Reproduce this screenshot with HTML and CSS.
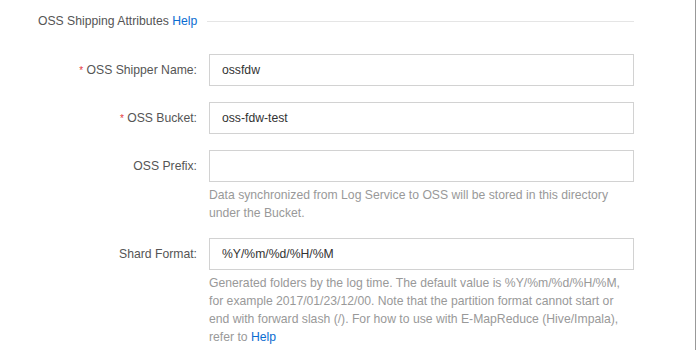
FILE: index.html
```html
<!DOCTYPE html>
<html lang="en">
<head>
    <meta charset="UTF-8">
    <title>OSS Shipping Attributes</title>
    <link rel="stylesheet" href="styles.css">
</head>
<body>
    <div class="panel">
        <!-- section title -->
        <div class="section-title">
            <span class="title-text">OSS Shipping Attributes <a href="#" class="link">Help</a></span>
            <span class="title-line"></span>
        </div>

        <form class="ship-form">
            <div class="form-row">
                <label class="form-label" for="shipper"><span class="req">*</span> OSS Shipper Name:</label>
                <div class="form-field">
                    <input type="text" id="shipper" class="form-input" value="ossfdw">
                </div>
            </div>

            <div class="form-row">
                <label class="form-label" for="bucket"><span class="req">*</span> OSS Bucket:</label>
                <div class="form-field">
                    <input type="text" id="bucket" class="form-input" value="oss-fdw-test">
                </div>
            </div>

            <div class="form-row">
                <label class="form-label" for="prefix">OSS Prefix:</label>
                <div class="form-field">
                    <input type="text" id="prefix" class="form-input" value="">
                    <p class="form-help">Data synchronized from Log Service to OSS will be stored in this directory under the Bucket.</p>
                </div>
            </div>

            <div class="form-row">
                <label class="form-label" for="shard">Shard Format:</label>
                <div class="form-field">
                    <input type="text" id="shard" class="form-input" value="%Y/%m/%d/%H/%M">
                    <p class="form-help">Generated folders by the log time. The default value is %Y/%m/%d/%H/%M, for example 2017/01/23/12/00. Note that the partition format cannot start or end with forward slash (/). For how to use with E-MapReduce (Hive/Impala), refer to <a href="#" class="link">Help</a></p>
                </div>
            </div>
        </form>
    </div>
</body>
</html>
```

FILE: styles.css
```css
* {
    margin: 0;
    padding: 0;
    box-sizing: border-box;
}

body {
    font-family: 'Liberation Sans', Arial, Helvetica, sans-serif;
    font-size: 12.2px;
    color: #333;
    background: #fff;
}

.panel {
    width: 696px;
    min-height: 350px;
    border-right: 1px solid #999;
    padding-top: 12px;
}

/* 标题 */
.section-title {
    display: flex;
    align-items: center;
    padding-left: 38px;
    width: 634px;
    height: 18px;
    margin-bottom: 24px;
}

.title-text {
    color: #555;
    white-space: nowrap;
}

.title-line {
    flex: 1;
    height: 1px;
    background: #e5e5e5;
    margin-left: 10px;
}

.link {
    color: #0a6cd1;
    text-decoration: none;
}

/* 表单 */
.form-row {
    display: flex;
    align-items: flex-start;
    margin-bottom: 16px;
}

.form-label {
    width: 197px;
    height: 32px;
    flex: none;
    text-align: right;
    line-height: 32px;
    color: #555;
    margin-right: 12px;
}

.req {
    color: #e4393c;
    font-size: 10px;
    line-height: 0;
}

.form-field {
    width: 425px;
}

.form-input {
    display: block;
    width: 100%;
    height: 32px;
    padding: 0 12px;
    border: 1px solid #d2d2d2;
    border-radius: 0;
    font-family: inherit;
    font-size: 12.2px;
    color: #333;
    outline: none;
}

.form-help {
    margin-top: 4px;
    color: #999;
    line-height: 18px;
}
```
